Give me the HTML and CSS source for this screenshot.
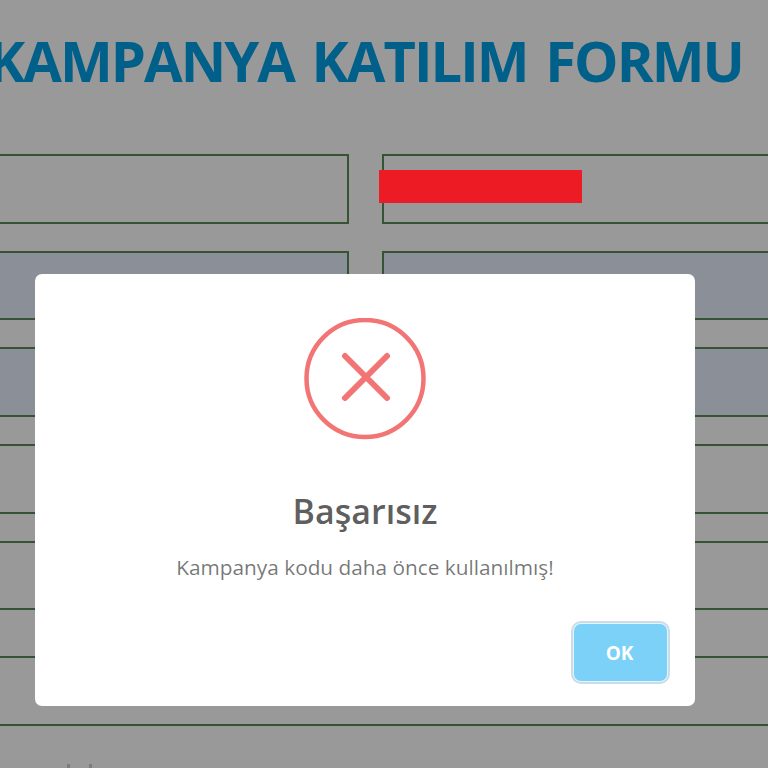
FILE: index.html
```html
<!DOCTYPE html>
<html lang="tr">
<head>
    <meta charset="UTF-8">
    <meta name="viewport" content="width=device-width, initial-scale=1.0">
    <title>Kampanya Katılım Formu</title>
    <link rel="stylesheet" href="styles.css">
</head>
<body>

    <div class="page">
        <h1 class="form-title">KAMPANYA KATILIM FORMU</h1>

        <form class="form-grid">
            <div class="field"></div>
            <div class="field"></div>
            <div class="field field-filled"></div>
            <div class="field field-filled"></div>
        </form>

        <div class="form-stack">
            <div class="field field-filled"></div>
            <div class="field"></div>
            <div class="field"></div>
            <div class="field field-last"></div>
        </div>

        <!-- tops of the next label, cut by the window -->
        <div class="label-tops">
            <span class="label-top"></span>
            <span class="label-top"></span>
        </div>
    </div>

    <div class="redact"></div>

    <div class="overlay">
        <div class="modal">
            <svg class="modal-icon" viewBox="0 0 122 122" aria-hidden="true">
                <circle cx="61" cy="60.500" r="58.500" fill="none" stroke="#f27474" stroke-width="4.500"></circle>
                <path d="M41 38 L83 80 M83 38 L41 80" fill="none" stroke="#f27474" stroke-width="6" stroke-linecap="round"></path>
            </svg>
            <div class="modal-title">Başarısız</div>
            <div class="modal-text">Kampanya kodu daha önce kullanılmış!</div>
            <div class="modal-footer">
                <button class="button">OK</button>
            </div>
        </div>
    </div>

</body>
</html>
```

FILE: styles.css
```css
html, body {
    height: 100%;
}

body {
    margin: 0;
    overflow: hidden;
    background-color: #fff;
    font-family: "Open Sans", sans-serif;
}

.page {
    width: 768px;
    height: 768px;
    overflow: hidden;
}

.form-title {
    margin: 25px 0 0 -12px;
    font-family: "Open Sans", sans-serif;
    font-size: 56px;
    line-height: 70px;
    font-weight: 700;
    letter-spacing: -1.95px;
    word-spacing: 5px;
    color: #00a0e6;
    white-space: nowrap;
}

.form-grid {
    display: grid;
    grid-template-columns: 369px 420px;
    column-gap: 33px;
    row-gap: 27px;
    margin: 59px 0 0 -20px;
}

.form-stack {
    display: grid;
    grid-template-columns: 822px;
    row-gap: 27px;
    margin: 27px 0 0 -20px;
}

.field {
    height: 69.67px;
    box-sizing: border-box;
    border: 2px solid #5a8a5a;
}

.field-filled {
    background-color: #e8f0fe;
}

.field-last {
    margin-top: 19px;
}

.label-tops {
    display: flex;
    gap: 19px;
    margin: 38px 0 0 67px;
}

.label-top {
    width: 3px;
    height: 5px;
    background-color: #d0d0d0;
}

.redact {
    position: absolute;
    left: 379px;
    top: 170px;
    width: 203px;
    height: 33px;
    background-color: #ed1c24;
    z-index: 2;
}

.overlay {
    position: fixed;
    inset: 0;
    background-color: rgba(0, 0, 0, 0.4);
}

.modal {
    position: absolute;
    left: 35px;
    top: 274px;
    width: 660px;
    height: 432px;
    box-sizing: border-box;
    padding-top: 44px;
    background-color: #fff;
    border-radius: 7px;
    text-align: center;
}

.modal-icon {
    display: block;
    width: 122px;
    height: 122px;
    margin: 0 auto;
}

.modal-title {
    margin-top: 49px;
    font-size: 34px;
    line-height: 44px;
    font-weight: 600;
    color: rgba(0, 0, 0, 0.65);
}

.modal-text {
    margin-top: 20px;
    font-size: 20.8px;
    line-height: 28px;
    color: rgba(0, 0, 0, 0.55);
}

.modal-footer {
    display: flex;
    justify-content: flex-end;
    margin-top: 43px;
    padding-right: 28px;
}

.button {
    width: 93px;
    height: 57px;
    padding: 0 2px 0 0;
    border: none;
    border-radius: 7px;
    background-color: #7cd1f9;
    box-shadow: 0 0 0 1px #e4f3fc, 0 0 0 3px rgba(43, 114, 165, 0.25);
    color: #fff;
    font-family: "Open Sans", sans-serif;
    font-size: 19px;
    font-weight: 700;
}
```
